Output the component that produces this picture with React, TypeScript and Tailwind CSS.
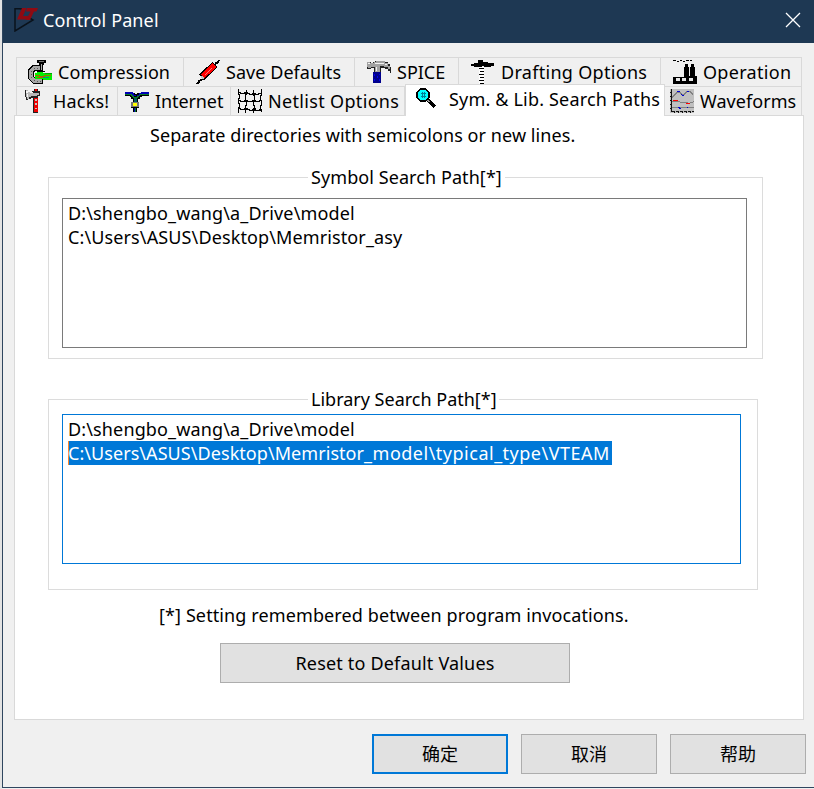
import React from "react";
import type { ReactNode } from "react";

function Icon({ children }: { children: ReactNode }) {
  return (
    <svg viewBox="0 0 24 24" className="h-6 w-6 shrink-0" shapeRendering="crispEdges" fill="none">
      {children}
    </svg>
  );
}

function LogoIcon() {
  return (
    <svg viewBox="0 0 24 24" className="h-6 w-6 shrink-0" fill="none">
      <path d="M9 1L1 .5V23L19 12L14 9" stroke="#0a121b" strokeWidth="1.5" />
      <path d="M8 0h4.500L9 8h5l-1.500 3.500H3ZM13 0h11l-1.500 3.500h-2.500L16 12h-4L16.500 3.500H12Z" fill="#8f0a12" />
    </svg>
  );
}

function ClampIcon() {
  return (
    <Icon>
      <path d="M9 0h9v3h-2v2h-5V3H9Z" fill="#000" />
      <path d="M11 1h5v1h-5Z" fill="#777" />
      <path d="M15 7.500H6.500L3 11v6.500L6.500 21H15" stroke="#000" strokeWidth="6" />
      <path d="M14 7.500H6.500L3 11v6.500L6.500 21H14" stroke="#a6a6a6" strokeWidth="4" />
      <path d="M6 8h1v1H6Zm3 0h1v1H9ZM3 11h1v1H3Zm0 3h1v1H3Zm0 3h1v1H3Zm3 3h1v1H6Zm3 1h1v1H9Zm3 0h1v1h-1Z" fill="#555" />
      <path d="M12 3h3v8h-3Z" fill="#000" />
      <path d="M13 4h1v6h-1Z" fill="#aaa" />
      <path d="M9 11h8v1H9Z" fill="#000" />
      <path d="M7 13h2v-1h6v1h9v7h-9v-1H7Z" fill="#00f000" />
      <path d="M7 15.500h4v1h5v-1h7M9 17.500h5v-1h3" stroke="#a46a00" />
      <path d="M15 17.500h6" stroke="#008c8c" />
      <path d="M17 13.500h7" stroke="#00a000" />
    </Icon>
  );
}

function FirecrackerIcon() {
  return (
    <Icon>
      <path d="M0 23.500h2v-1h1v-2h2v-1h1v-1M19.500 5v-2h2v-1h1V.5H24" stroke="#000" strokeWidth="1.300" />
      <path d="M5.500 17.500L19 4.500" stroke="#000" strokeWidth="7.500" />
      <path d="M6.500 16.500L18.600 4.900" stroke="#f00" strokeWidth="5.400" />
      <path d="M5 16h2v1h1v2H6v-1H5Z" fill="#c0c0c0" />
      <path d="M8 14.500L15 7.500" stroke="#ff8080" strokeWidth="0.900" />
    </Icon>
  );
}

function HammerIcon() {
  return (
    <Icon>
      <path d="M0 2h4v1h2V2h2V1h10v1h3v2h2v3h1v6h-1v-2h-2V9h-3V8h-4v4H7V8H4v1H0Z" fill="#222" />
      <path d="M0 2h3v1h4V2h2V1h9v2h3v3h2v3h-2V7h-4V6h-4v6H8V7H4v1H1V7H0Z" fill="#a2a2a2" />
      <path d="M1 3.500h2M8 3.500h9M18 4.500h2M9.500 7v4" stroke="#f2f2f2" />
      <path d="M6 12h8v11H6Z" fill="#00008c" />
      <path d="M7 14h1v2H7Zm3 2h1v2h-1Zm-3 3h1v2H7Zm5-5h1v1h-1Zm0 5h1v2h-1Z" fill="#0000f4" />
    </Icon>
  );
}

function RulerIcon() {
  return (
    <Icon>
      <path d="M0 4h3V3h4V0h5v2h5v1h6v3h-3v1h-7V6h-2v1H3V6H0Z" fill="#000" />
      <path d="M8 7h5v17H8Z" fill="#fff" />
      <path d="M8 8.500h5M9 11.500h4M8 14.500h5M9 17.500h4M8 20.500h5M9 23.500h4" stroke="#000" />
    </Icon>
  );
}

function FactoryIcon() {
  return (
    <Icon>
      <path d="M0 0h3v1H0Zm4 1h2v1H4Zm3-1h2v1H7Zm3 1h2v1h-2Zm3-1h3v1h-3Zm4 0h2v1h-2Z" fill="#000" />
      <path d="M12 4h3v3h1v9h1V7h1V4h3v3h1v9h2v8H0v-7h11V7h1Z" fill="#000" />
      <path d="M3 18h4v3H3Zm6 0h4v3H9Zm7 0h4v3h-4Z" fill="#e8e8e8" />
    </Icon>
  );
}

function AxeIcon() {
  return (
    <Icon>
      <path d="M0 1h3v2h4V2h2V0h4v2h2v5h-2v17H8V9H6v1H3v1H1V8H0Z" fill="#222" />
      <path d="M1 1h2v2h5v1h6v2h-2v1H6v1H4v2H2V8H1Z" fill="#b8b8b8" />
      <path d="M1 2h2v2H1Zm4 1h3v1H5ZM2 5h1v3H2Z" fill="#f4f4f4" />
      <path d="M10 0h2v2h-2ZM9 9h4v14H9Z" fill="#e00" />
      <path d="M10 10h2v2h-2Zm0 4h2v2h-2Zm0 5h2v1h-2Z" fill="#c5c5c5" />
    </Icon>
  );
}

function CableIcon() {
  return (
    <Icon>
      <path d="M0 3h8v1h2v1h2V4h4V3h8v4h-7v1h-2v2h-2v3h1v6h-2v4H8v-4H6v-6h2v-3H6V8H5V7H0Z" fill="#000" />
      <path d="M0 3h8v1h1v2h2v1h-3V6H6V5H0ZM24 3h-8v1h-2v2h-2v1h3V6h2V5h7Z" fill="#0000b4" />
      <path d="M0 5.500h6l3 3h3l4-3h8" stroke="#087c28" />
      <path d="M9 9h3v4H9Z" fill="#005c5c" />
      <path d="M6 13h8v5H6Z" fill="#777" />
      <path d="M8 14h4v3H8Z" fill="#ff0" />
      <path d="M9 19h1v4H9Z" fill="#0000b4" />
      <path d="M10 19h1v4h-1Z" fill="#00822a" />
    </Icon>
  );
}

function NetIcon() {
  return (
    <Icon>
      <path d="M.5 0v5h1v4h-1v5h1v4h-1v6M8.500 1v4h-1v6h1v5h-1v8M15.500 1v5h1v5h-1v5h1v5h-1v3M23.500 0v6h-1v5h1v5h-1v5h1v2" stroke="#000" />
      <path d="M0 3.500h2v1h4v-1h3v1h2v1h3v-1h3v1h3v-1h4M0 11.500h2v1h4v-1h3v1h5v-1h3v1h4v-1h3M0 19.500h2v1h4v-1h3v1h2v1h3v-1h3v1h4v-1h3" stroke="#000" strokeWidth="1" />
      <path d="M7 3h3v2H7Zm8 1h3v2h-3ZM6 11h3v2H6Zm8 0h3v2h-3ZM7 19h3v2H7Zm8 0h3v2h-3Z" fill="#000" />
    </Icon>
  );
}

function SearchIcon() {
  return (
    <Icon>
      <path d="M12.500 12.500l7.500 7.500" stroke="#000" strokeWidth="4" />
      <path d="M12 13h2v1h1v1h-2v-1h-1Z" fill="#999" />
      <circle cx="8" cy="8" r="6.200" fill="#0ff" stroke="#000" strokeWidth="1.800" />
      <path d="M7.500 5v6M9.500 5v6M6 6.500h5M6 9.500h5" stroke="#007c94" />
    </Icon>
  );
}

function WaveIcon() {
  return (
    <Icon>
      <path d="M0 0h24v24H0Z" fill="#c0c0c0" />
      <path d="M1.500 0v24M2 22.500h22" stroke="#111" strokeDasharray="3 1" />
      <path d="M4.500 22v2M8.500 22v2M12.500 22v2M16.500 22v2M20.500 22v2M0 3.500h2M0 7.500h2M0 11.500h2M0 15.500h2M0 19.500h2" stroke="#111" />
      <path d="M2 8.500l2-2 3-3h3l3 3 4-4h3l3 3M2 12.500h6l4 1h4l3 1 5-2M2 18.500h22" stroke="#808080" />
      <path d="M7 2.500h3M11 5.500h1M12 6.500h2M17 2.500h2M8 18.500h2M9 19.500h2M17 18.500h1" stroke="#0000d0" />
      <path d="M3 11.500h5M16 14.500h4" stroke="#f00" />
    </Icon>
  );
}

interface TabProps {
  icon: ReactNode;
  label: string;
  className: string;
  text: string;
}

function Tab({ icon, label, className, text }: TabProps) {
  return (
    <button className={`flex h-[29px] items-center border-t border-r border-[#d9d9d9] ${className}`}>
      {icon}
      <span className={`whitespace-nowrap ${text}`}>{label}</span>
    </button>
  );
}

export default function App() {
  return (
    <div className="flex h-[789px] w-[814px] flex-col overflow-hidden border-l-2 border-[#e3e3e3] bg-[#f0f0f0] font-['Noto_Sans','Noto_Sans_CJK_SC',sans-serif] text-[18px] leading-6 text-black">
      <div className="flex h-[788px] flex-col border-b border-l border-[#2f465f]">
        <header className="flex h-[43px] shrink-0 items-center bg-[#1e3853] pb-[3px] pl-[11px] text-white">
          <LogoIcon />
          <span className="-mt-px ml-[5px] tracking-[0.12px] whitespace-nowrap">Control Panel</span>
          <svg viewBox="0 0 16 16" className="mr-[13px] ml-auto h-4 w-4" stroke="#fff" strokeWidth="1.300">
            <path d="M1 1l14 14M15 1L1 15" />
          </svg>
        </header>

        <nav className="mt-[14px] ml-[13px] w-[786px] shrink-0">
          <div className="flex">
            <Tab icon={<ClampIcon />} label="Compression" className="w-[168px] border-l pl-[11px]" text="ml-[6px] tracking-[0.07px]" />
            <Tab icon={<FirecrackerIcon />} label="Save Defaults" className="w-[171px] pl-3" text="ml-[6px] tracking-[0.05px]" />
            <Tab icon={<HammerIcon />} label="SPICE" className="w-[104px] pl-3" text="ml-[6px]" />
            <Tab icon={<RulerIcon />} label="Drafting Options" className="w-[202px] pl-3" text="ml-[6px] tracking-[0.3px]" />
            <Tab icon={<FactoryIcon />} label="Operation" className="w-[141px] pl-3" text="ml-[6px] tracking-[0.3px]" />
          </div>
          <div className="flex">
            <Tab icon={<AxeIcon />} label="Hacks!" className="w-[102px] border-l pl-[8px]" text="ml-[4px] tracking-[0.2px]" />
            <Tab icon={<CableIcon />} label="Internet" className="w-[113px] pl-[7px]" text="ml-[6px] tracking-[-0.1px]" />
            <Tab icon={<NetIcon />} label="Netlist Options" className="w-[174px] pl-[7px]" text="ml-[6px] tracking-[0.33px]" />
            <button className="relative z-10 -mt-[2px] -mb-px flex h-[32px] w-[260px] items-center border-x border-t border-[#d9d9d9] bg-white pb-[3px] pl-[9px]">
              <SearchIcon />
              <span className="ml-[10px] tracking-[0.18px] whitespace-nowrap">Sym. &amp; Lib. Search Paths</span>
            </button>
            <Tab icon={<WaveIcon />} label="Waveforms" className="w-[137px] pl-[5px]" text="ml-[6px] tracking-[0.05px]" />
          </div>
        </nav>

        <main className="ml-[11px] flex h-[605px] w-[790px] shrink-0 flex-col border border-[#d9d9d9] bg-white">
          <p className="mt-[7px] ml-[135px] tracking-[0.07px] whitespace-nowrap">
            Separate directories with semicolons or new lines.
          </p>

          <section className="mt-[30px] ml-[33px] h-[182px] w-[715px] shrink-0 border border-[#dcdcdc]">
            <h2 className="-mt-[13px] ml-[259px] h-6 w-[197px] bg-white pl-[3px] tracking-[0.08px] whitespace-nowrap">
              Symbol Search Path[*]
            </h2>
            <div className="mt-[9px] ml-[13px] h-[150px] w-[685px] border border-[#7a7a7a] pt-[2px] pl-[5px] whitespace-nowrap">
              <p className="tracking-[0.14px]">D:\shengbo_wang\a_Drive\model</p>
              <p className="tracking-[0.12px]">C:\Users\ASUS\Desktop\Memristor_asy</p>
            </div>
          </section>

          <section className="mt-[40px] ml-[33px] h-[191px] w-[710px] shrink-0 border border-[#dcdcdc]">
            <h2 className="-mt-[13px] ml-[259px] h-6 w-[191px] bg-white pl-[3px] whitespace-nowrap">
              Library Search Path[*]
            </h2>
            <div className="mt-[3px] ml-[13px] h-[150px] w-[679px] border border-[#0078d7] pt-[2px] pl-[5px] whitespace-nowrap">
              <p className="tracking-[0.14px]">D:\shengbo_wang\a_Drive\model</p>
              <p className="w-[544px] bg-[#0078d7] text-white">
                <span className="inline-block border-l border-[#ff8728] tracking-[0.06px]">
                  <span className="-ml-px">C:\Users\ASUS\Desktop\Memristor</span>
                </span>
                <span className="inline-block tracking-[0.5px]">_model\typical_type\VTEAM</span>
              </p>
            </div>
          </section>

          <p className="mt-[13px] ml-[144px] tracking-[0.11px] whitespace-nowrap">
            [*] Setting remembered between program invocations.
          </p>
          <button className="mt-[16px] ml-[205px] h-[40px] w-[350px] shrink-0 border border-[#adadad] bg-[#e1e1e1] tracking-[0.18px]">
            Reset to Default Values
          </button>
        </main>

        <footer className="mt-[14px] ml-[369px] flex gap-[13px]">
          <button className="h-[40px] w-[136px] border-2 border-[#0078d7] bg-[#e1e1e1]">确定</button>
          <button className="h-[40px] w-[136px] border border-[#adadad] bg-[#e1e1e1]">取消</button>
          <button className="h-[40px] w-[136px] border border-[#adadad] bg-[#e1e1e1]">帮助</button>
        </footer>
      </div>
    </div>
  );
}
